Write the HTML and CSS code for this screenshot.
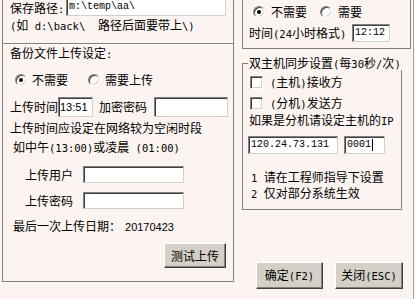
FILE: index.html
```html
<!DOCTYPE html>
<html lang="zh-CN">
<head>
<meta charset="utf-8">
<title>备份设置</title>
<link rel="stylesheet" href="styles.css">
</head>
<body>
<div class="page">
  <section class="left">
    <div class="row r-path"><span class="lbl-path">保存路径<span class="m">:</span></span><span class="tb tb-path mi">m:\temp\aa\</span></div>
    <p class="txt r-hint"><span class="m">(</span>如<span class="m"> d:\back\  </span>路径后面要带上<span class="m">\)</span></p>
    <div class="sep"></div>
    <p class="txt r-title">备份文件上传设定<span class="m">:</span></p>
    <div class="row r-radio">
      <span class="radio on"></span><span class="rtxt">不需要</span>
      <span class="radio r2"></span><span class="rtxt">需要上传</span>
    </div>
    <div class="row r-time">
      <span class="lbl4">上传时间</span><span class="tb tb-time s">13:51</span>
      <span class="lbl4 lbl-enc">加密密码</span><span class="tb tb-enc"></span>
    </div>
    <p class="txt r-note1">上传时间应设定在网络较为空闲时段</p>
    <p class="txt r-note2">如中午<span class="m">(13:00)</span>或凌晨<span class="m"> (01:00)</span></p>
    <div class="row r-user"><span class="lbl4">上传用户</span><span class="tb tb-user"></span></div>
    <div class="row r-pwd"><span class="lbl4">上传密码</span><span class="tb tb-user"></span></div>
    <p class="txt r-last">最后一次上传日期：<span class="s date">20170423</span></p>
    <div class="row r-btn"><button class="btn btn-test">测试上传</button></div>
  </section>

  <section class="right">
    <div class="topbox">
      <div class="row t-radio">
        <span class="radio on"></span><span class="rtxt">不需要</span>
        <span class="radio t2"></span><span class="rtxt">需要</span>
      </div>
      <div class="row t-time"><span class="tlbl">时间<span class="m">(24</span>小时格式<span class="m">)</span></span><span class="tb tb-hm mi">12:12</span></div>
    </div>

    <fieldset class="sync">
      <legend>双主机同步设置<span class="m">(</span>每<span class="m">30</span>秒<span class="m">/</span>次<span class="m">)</span></legend>
      <div class="row s-chk1"><span class="chk"></span><span class="ctxt"><span class="m">(</span>主机<span class="m">)</span>接收方</span></div>
      <div class="row s-chk2"><span class="chk"></span><span class="ctxt"><span class="m">(</span>分机<span class="m">)</span>发送方</span></div>
      <p class="txt s-ipnote">如果是分机请设定主机的<span class="m">IP</span></p>
      <div class="row s-ip"><span class="tb tb-ip mi">120.24.73.131</span><span class="tb tb-port mi">0001<span class="caret"></span></span></div>
      <p class="txt s-n1"><span class="m">1 </span>请在工程师指导下设置</p>
      <p class="txt s-n2"><span class="m">2 </span>仅对部分系统生效</p>
    </fieldset>

    <div class="row s-btns">
      <button class="btn btn-ok"><span>确定<span class="m">(F2)</span></span></button>
      <button class="btn btn-close"><span>关闭<span class="m">(ESC)</span></span></button>
    </div>
  </section>
  <div class="edge"></div>
</div>
</body>
</html>
```

FILE: styles.css
```css
* { box-sizing: border-box; margin: 0; padding: 0; }
html, body { height: 100%; }
body {
  margin: 0;
  background: #fcf4f1;
  font-family: "Noto Sans CJK SC", "Liberation Sans", sans-serif;
  font-size: 12px;
  color: #000;
  overflow: hidden;
}
.page {
  display: flex;
  align-items: flex-start;
  width: 415px;
  height: 299px;
}
/* half-width ASCII inside Chinese text */
.m { font-family: "DejaVu Sans Mono", monospace; font-size: 10.5px; }
/* ASCII inside edit boxes */
.mi { font-family: "Liberation Mono", monospace; font-size: 10px; }
.s { font-family: "Liberation Sans", sans-serif; font-size: 11px; }

.row {
  display: flex;
  align-items: center;
  height: 16px;
  line-height: 16px;
  white-space: pre;
  flex: none;
}
.txt {
  display: block;
  height: 16px;
  line-height: 16px;
  white-space: pre;
  flex: none;
}

/* controls */
.tb {
  display: flex;
  align-items: center;
  background: #fff;
  border: 1px solid;
  border-color: #808080 #d4d0c8 #d4d0c8 #808080;
  box-shadow: inset 1px 1px 0 #404040;
  padding: 0 2px;
  line-height: 14px;
  flex: none;
}
.radio {
  position: relative;
  width: 12px;
  height: 12px;
  border-radius: 50%;
  background: #fff;
  border: 1px solid;
  border-color: #808080 #fff #fff #808080;
  box-shadow: inset 1px 1px 0 #404040, inset -1px -1px 0 #d4d0c8;
  flex: none;
}
.radio.on::after {
  content: "";
  position: absolute;
  left: 3px;
  top: 3px;
  width: 4px;
  height: 4px;
  border-radius: 50%;
  background: #000;
}
.rtxt { margin-left: 5px; }
.chk {
  width: 13px;
  height: 13px;
  background: #fff;
  border: 1px solid;
  border-color: #808080 #fff #fff #808080;
  box-shadow: inset 1px 1px 0 #404040, inset -1px -1px 0 #d4d0c8;
  flex: none;
}
.ctxt { margin-left: 7px; }
.btn {
  display: flex;
  align-items: center;
  justify-content: center;
  background: #d4d0c8;
  border: 1px solid;
  border-color: #fff #404040 #404040 #fff;
  box-shadow: inset -1px -1px 0 #808080;
  font-family: "Noto Sans CJK SC", sans-serif;
  font-size: 12px;
  line-height: 16px;
  color: #000;
  white-space: pre;
}

/* left panel */
.left {
  margin-left: 2px;
  width: 232px;
  height: 282px;
  border: 1px solid #808080;
  border-top: 0;
  display: flex;
  flex-direction: column;
}
.r-path { margin-top: -2px; height: 18px; padding-left: 7px; }
.lbl-path { width: 56px; line-height: 13px; margin-top: 3px; }
.tb-path { width: 160px; height: 18px; margin-top: -1px; }
.r-hint { margin-top: 1px; padding-left: 7px; }
.sep {
  margin-top: 10px;
  height: 2px;
  border-top: 1px solid #808080;
  border-bottom: 1px solid #fff;
  flex: none;
}
.r-title { padding-left: 7px; }
.r-radio { margin-top: 11px; padding-left: 12px; }
.r-radio .r2 { margin-left: 20px; }
.r-time { margin-top: 9px; height: 20px; padding-left: 7px; }
.lbl4 { width: 48px; }
.tb-time { width: 35px; height: 20px; padding-left: 1px; }
.lbl-enc { margin-left: 6px; }
.tb-enc { width: 74px; height: 20px; margin-left: 7px; }
.r-note1 { margin-top: 3px; padding-left: 7px; }
.r-note2 { margin-top: 3px; padding-left: 10px; }
.r-user { margin-top: 11px; height: 17px; padding-left: 22px; }
.r-pwd { margin-top: 9px; height: 17px; padding-left: 22px; }
.tb-user { width: 101px; height: 17px; margin-left: 10px; }
.r-last { margin-top: 9px; padding-left: 10px; }
.date { margin-left: 4px; }
.r-btn { margin-top: 9px; height: 25px; justify-content: flex-end; padding-right: 7px; }
.btn-test { width: 62px; height: 25px; }

/* right panel */
.right {
  margin-left: 8px;
  width: 169px;
  display: flex;
  flex-direction: column;
}
.topbox {
  width: 169px;
  height: 49px;
  border: 1px solid #808080;
  border-top: 0;
  display: flex;
  flex-direction: column;
}
.t-radio { margin-top: 4px; padding-left: 10px; }
.t-radio .rtxt { margin-left: 6px; }
.t-radio .t2 { margin-left: 13px; }
.t-time { margin-top: 4px; height: 18px; padding-left: 6px; }
.tlbl { width: 97px; }
.tb-hm { width: 38px; height: 18px; margin-left: 6px; }

.sync {
  width: 160px;
  height: 154px;
  margin-top: 7px;
  border: 1px solid #808080;
  padding: 0;
  min-width: 0;
}
.sync legend {
  margin-left: 5px;
  padding: 0 1px;
  height: 14px;
  line-height: 14px;
  white-space: pre;
}
.s-chk1 { margin-top: 4px; padding-left: 7px; }
.s-chk2 { margin-top: 5px; padding-left: 7px; }
.s-ipnote { margin-top: 1px; padding-left: 6px; }
.s-ip { margin-top: 8px; height: 18px; padding-left: 5px; }
.tb-ip { width: 90px; height: 18px; }
.tb-port { width: 41px; height: 18px; margin-left: 6px; }
.caret { width: 1px; height: 12px; background: #000; margin-left: 1px; }
.s-n1 { margin-top: 15px; padding-left: 8px; }
.s-n2 { padding-left: 8px; }

.s-btns { margin-top: 52px; height: 27px; padding-left: 14px; }
.btn-ok { width: 67px; height: 27px; }
.btn-close { width: 68px; height: 27px; margin-left: 12px; }

.edge {
  margin-left: 2px;
  width: 1px;
  height: 299px;
  background: #a0a0a0;
  flex: none;
}
```
